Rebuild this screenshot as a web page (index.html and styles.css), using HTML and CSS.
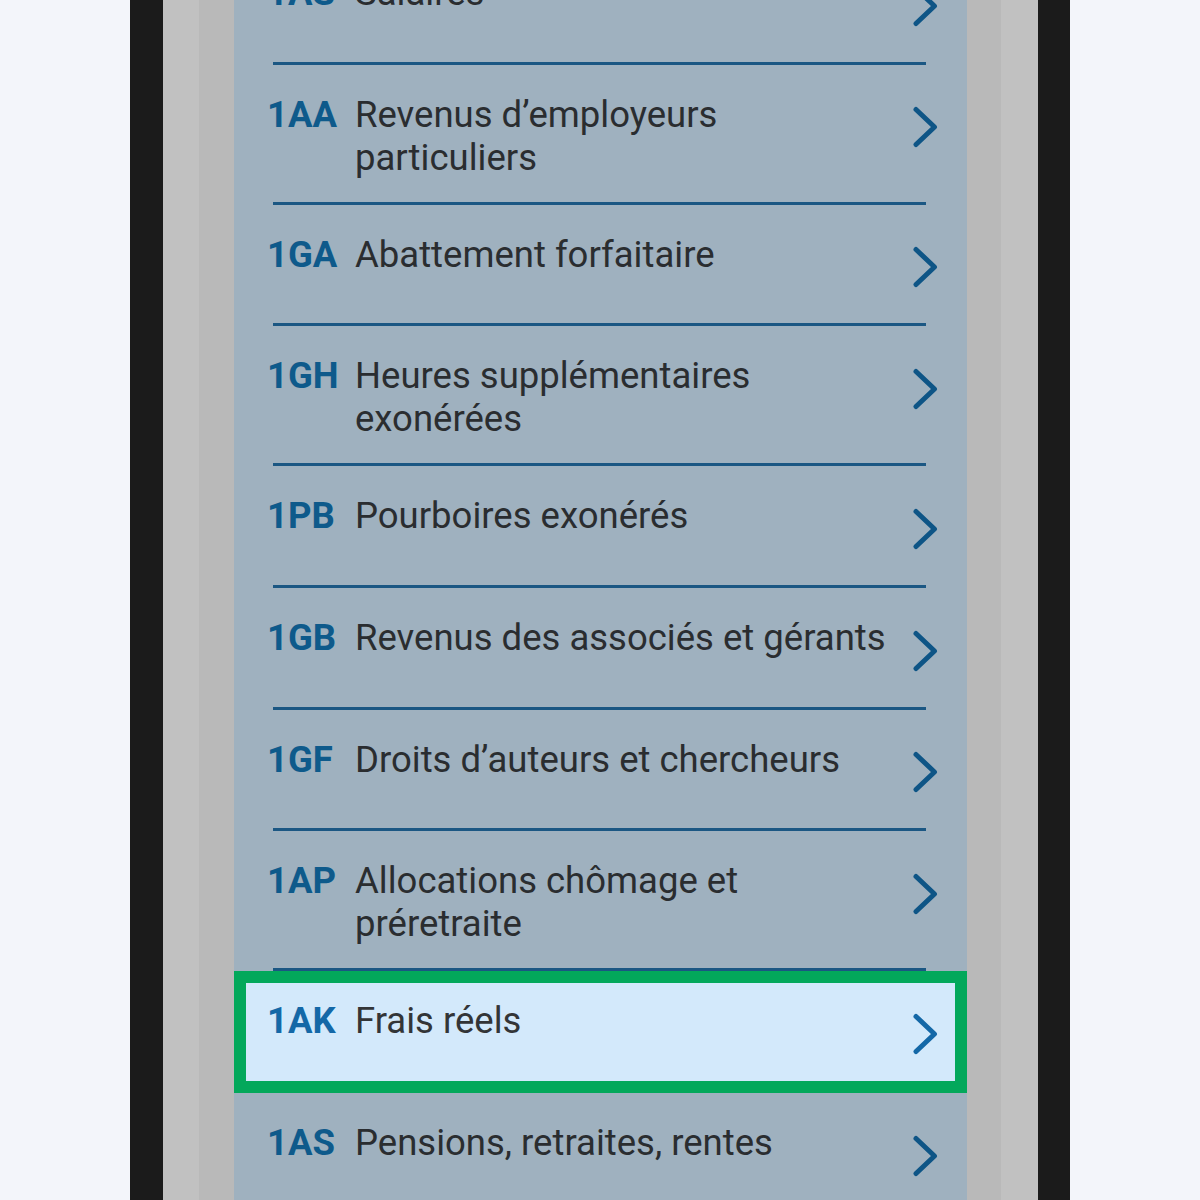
FILE: index.html
```html
<!DOCTYPE html>
<html lang="fr">
<head>
<meta charset="utf-8">
<title>Revenus</title>
<link rel="stylesheet" href="styles.css">
</head>
<body>
<div class="device">
  <div class="bezel">
    <div class="sheet">
      <main class="panel">
        <ul class="boxes">
          <li class="row"><span class="code">1AS</span><span class="label">Salaires</span><svg class="chev" viewBox="0 0 30 42"><polyline points="6,3.5 24.5,21 6,38.5"/></svg></li>
          <li class="divider" role="separator"></li>
          <li class="row"><span class="code">1AA</span><span class="label">Revenus d’employeurs particuliers</span><svg class="chev" viewBox="0 0 30 42"><polyline points="6,3.5 24.5,21 6,38.5"/></svg></li>
          <li class="divider" role="separator"></li>
          <li class="row"><span class="code">1GA</span><span class="label">Abattement forfaitaire</span><svg class="chev" viewBox="0 0 30 42"><polyline points="6,3.5 24.5,21 6,38.5"/></svg></li>
          <li class="divider" role="separator"></li>
          <li class="row"><span class="code">1GH</span><span class="label">Heures supplémentaires exonérées</span><svg class="chev" viewBox="0 0 30 42"><polyline points="6,3.5 24.5,21 6,38.5"/></svg></li>
          <li class="divider" role="separator"></li>
          <li class="row"><span class="code">1PB</span><span class="label">Pourboires exonérés</span><svg class="chev" viewBox="0 0 30 42"><polyline points="6,3.5 24.5,21 6,38.5"/></svg></li>
          <li class="divider" role="separator"></li>
          <li class="row"><span class="code">1GB</span><span class="label">Revenus des associés et gérants</span><svg class="chev" viewBox="0 0 30 42"><polyline points="6,3.5 24.5,21 6,38.5"/></svg></li>
          <li class="divider" role="separator"></li>
          <li class="row"><span class="code">1GF</span><span class="label">Droits d’auteurs et chercheurs</span><svg class="chev" viewBox="0 0 30 42"><polyline points="6,3.5 24.5,21 6,38.5"/></svg></li>
          <li class="divider" role="separator"></li>
          <li class="row"><span class="code">1AP</span><span class="label">Allocations chômage et préretraite</span><svg class="chev" viewBox="0 0 30 42"><polyline points="6,3.5 24.5,21 6,38.5"/></svg></li>
          <li class="divider" role="separator"></li>
          <li class="row row--focus"><span class="code">1AK</span><span class="label">Frais réels</span><svg class="chev" viewBox="0 0 30 42"><polyline points="6,3.5 24.5,21 6,38.5"/></svg></li>
          <li class="divider" role="separator"></li>
          <li class="row"><span class="code">1AS</span><span class="label">Pensions, retraites, rentes</span><svg class="chev" viewBox="0 0 30 42"><polyline points="6,3.5 24.5,21 6,38.5"/></svg></li>
          <li class="divider" role="separator"></li>
        </ul>
      </main>
    </div>
  </div>
</div>
</body>
</html>
```
FILE: styles.css
```css
* {
  box-sizing: border-box;
}

html,
body {
  margin: 0;
  height: 1200px;
  overflow: hidden;
  background: #f3f5fa;
}

body {
  display: flex;
  justify-content: center;
  font-family: Roboto, "Noto Sans", sans-serif;
}

/* phone frame: dark edges, two grey bands, dimmed content */
.device {
  width: 940px;
  height: 1200px;
  border-left: 33px solid #1b1b1b;
  border-right: 32px solid #1b1b1b;
  background: #c1c1c1;
  overflow: hidden;
}

.bezel {
  height: 100%;
  padding: 0 37px 0 36px;
  background: #c1c1c1;
}

.sheet {
  height: 100%;
  padding: 0 34px 0 35px;
  background: #b9b9b9;
}

.panel {
  height: 100%;
  background: #9fb1bf;
  overflow: hidden;
}

.boxes {
  list-style: none;
  margin: -57px 0 0;
  padding: 0;
  display: flex;
  flex-direction: column;
}

.row {
  display: flex;
  align-items: flex-start;
  min-height: 118.7px;
  padding: 28px 27px 23px 33px;
  font-size: 36.5px;
  line-height: 43px;
}

.code {
  flex: 0 0 88px;
  font-weight: 700;
  color: #0e5a8b;
}

.label {
  flex: 1 1 auto;
  color: #2a2d30;
}

.chev {
  flex: 0 0 30px;
  width: 30px;
  height: 42px;
  margin: 13.5px 0 0 20px;
  fill: none;
  stroke: #0e5586;
  stroke-width: 5;
  stroke-linecap: round;
  stroke-linejoin: round;
}

.divider {
  height: 3px;
  margin: 0 41px 0 39px;
  background: #1b5783;
}

/* the focused entry is not dimmed and carries a green focus ring */
.row--focus {
  position: relative;
  z-index: 1;
  min-height: 121.7px;
  margin-bottom: -3px;
  background: #d3e9fb;
  outline: 12px solid #03a85b;
  outline-offset: -12px;
}

.row--focus .code {
  color: #1468a7;
}

.row--focus .label {
  color: #333537;
}

.row--focus .chev {
  stroke: #1468a7;
}
```
